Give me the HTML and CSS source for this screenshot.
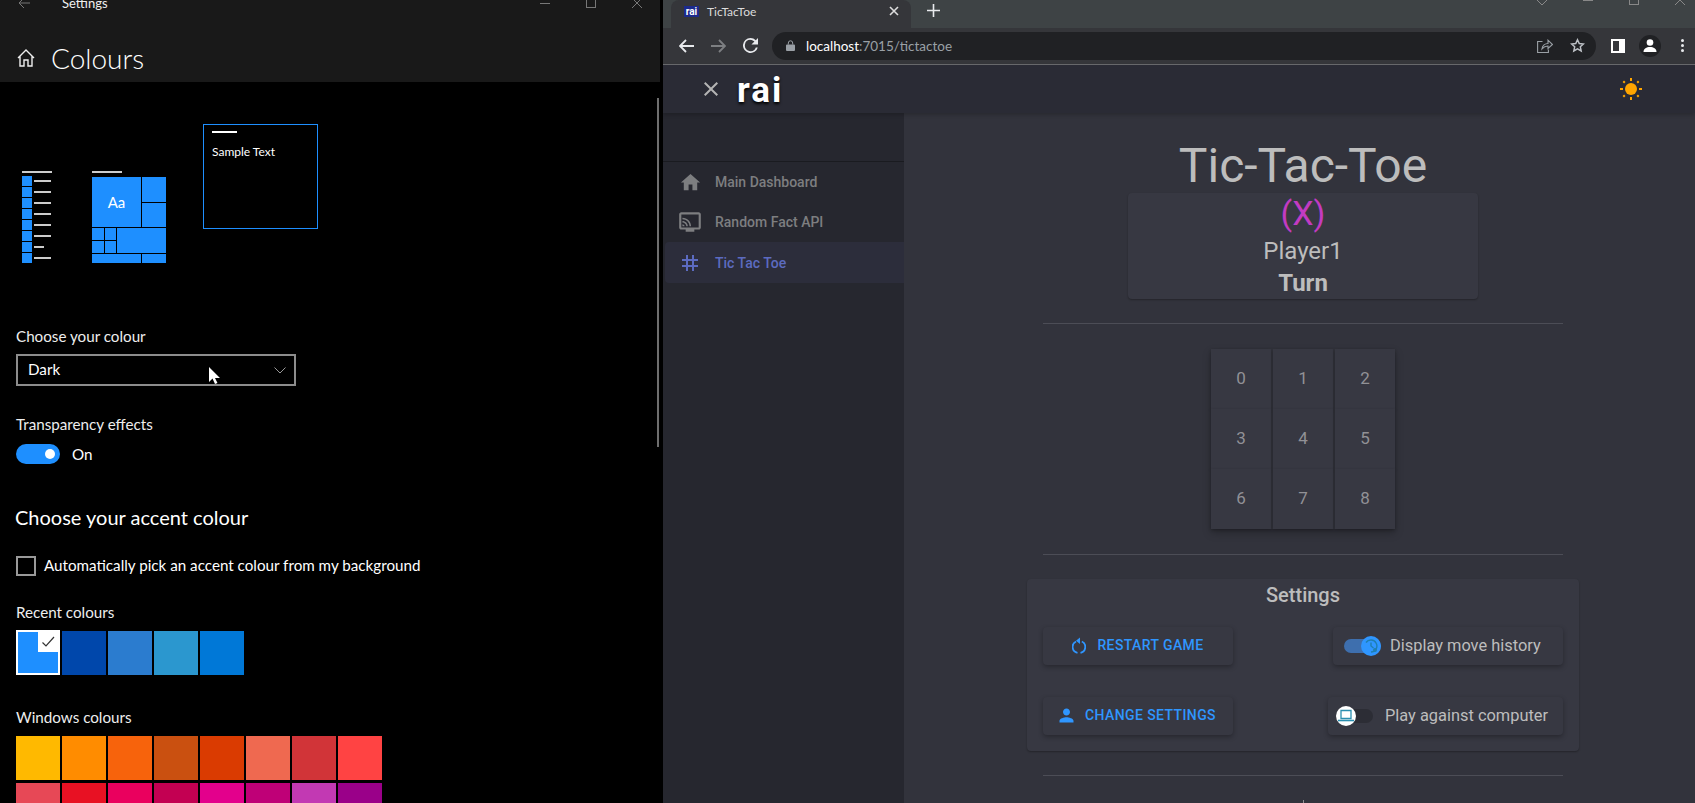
FILE: index.html

```html
<!DOCTYPE html>
<html lang="en">
<head>
  <meta charset="UTF-8" />
  <title>Colours and TicTacToe</title>
  <link rel="stylesheet" href="styles.css">
</head>
<body>
  <section class="settings">
    <header class="settings-head">
      <div class="titlebar">
        <svg class="tb-back" width="12" height="10" viewBox="0 0 12 10"><path d="M6 0 1 5l5 5M1 5h11" fill="none" stroke="#777" stroke-width="1"/></svg>
        <span class="tb-title">Settings</span>
        <span class="tb-min"></span>
        <span class="tb-max"></span>
        <svg class="tb-close" width="10" height="10" viewBox="0 0 10 10"><path d="M0 0l10 10M10 0 0 10" stroke="#777" stroke-width="1"/></svg>
      </div>
      <div class="page-title">
        <svg width="18" height="18" viewBox="0 0 18 18"><path d="M1 9 9 1l8 8M3 7.500V17h4v-6h4v6h4V7.500" fill="none" stroke="#eee" stroke-width="1.400"/></svg>
        <h1>Colours</h1>
      </div>
    </header>
    <div class="scrollbar"></div>

    <div class="previews">
      <div class="prev-list">
        <div class="prev-bar"></div>
        <div class="list-row"><i></i><b></b></div>
        <div class="list-row"><i></i><b></b></div>
        <div class="list-row"><i></i><b></b></div>
        <div class="list-row"><i></i><b></b></div>
        <div class="list-row"><i></i><b></b></div>
        <div class="list-row"><i></i><b></b></div>
        <div class="list-row"><i></i><b class="short"></b></div>
        <div class="list-row"><i></i><b></b></div>
      </div>
      <div class="prev-tiles">
        <div class="prev-bar"></div>
        <div class="tiles">
          <div class="tile-aa">Aa</div>
          <div class="tile-r1"></div>
          <div class="tile-r2"></div>
          <div class="tile-s1"></div>
          <div class="tile-s2"></div>
          <div class="tile-s3"></div>
          <div class="tile-s4"></div>
          <div class="tile-big"></div>
          <div class="tile-b1"></div>
          <div class="tile-b2"></div>
        </div>
      </div>
      <div class="prev-sample">
        <div class="sample-bar"></div>
        <p>Sample Text</p>
      </div>
    </div>

    <label class="s-label label-colour">Choose your colour</label>
    <div class="dropdown">
      <span class="lift">Dark</span>
      <svg width="12" height="7" viewBox="0 0 12 7"><path d="M.5.5 6 6 11.500.5" fill="none" stroke="#999" stroke-width="1"/></svg>
      <svg class="cursor" width="11" height="17" viewBox="0 0 11 17"><path d="M0 0v15l3.500-3.500L6 17l2.500-1L6 11h5z" fill="#fff"/></svg>
    </div>

    <label class="s-label label-trans">Transparency effects</label>
    <div class="toggle-row">
      <div class="win-toggle"><span></span></div>
      <span>On</span>
    </div>

    <h2 class="s-heading">Choose your accent colour</h2>
    <div class="check-row">
      <span class="checkbox"></span>
      <span class="lift">Automatically pick an accent colour from my background</span>
    </div>

    <label class="s-label label-recent">Recent colours</label>
    <div class="swatches">
      <div class="swatch picked">
        <span class="picked-mark">
          <svg width="14" height="12" viewBox="0 0 14 12"><path d="M1.500 6.500 5 10l8-9" fill="none" stroke="#333" stroke-width="1.200"/></svg>
        </span>
      </div>
      <div class="swatch c-cobalt"></div>
      <div class="swatch c-blue2"></div>
      <div class="swatch c-blue3"></div>
      <div class="swatch c-blue4"></div>
    </div>

    <label class="s-label label-windows">Windows colours</label>
    <div class="swatches win-grid">
      <div class="swatch" style="background:#ffb900"></div>
      <div class="swatch" style="background:#ff8c00"></div>
      <div class="swatch" style="background:#f7630c"></div>
      <div class="swatch" style="background:#ca5010"></div>
      <div class="swatch" style="background:#da3b01"></div>
      <div class="swatch" style="background:#ef6950"></div>
      <div class="swatch" style="background:#d13438"></div>
      <div class="swatch" style="background:#ff4343"></div>
      <div class="swatch" style="background:#e74856"></div>
      <div class="swatch" style="background:#e81123"></div>
      <div class="swatch" style="background:#ea005e"></div>
      <div class="swatch" style="background:#c30052"></div>
      <div class="swatch" style="background:#e3008c"></div>
      <div class="swatch" style="background:#bf0077"></div>
      <div class="swatch" style="background:#c239b3"></div>
      <div class="swatch" style="background:#9a0089"></div>
    </div>
  </section>

  <section class="browser">
    <div class="tabstrip">
      <div class="tab">
        <span class="favicon">rai</span>
        <span class="tab-title">TicTacToe</span>
        <svg class="tab-close" width="10" height="10" viewBox="0 0 10 10"><path d="M1 1l8 8M9 1 1 9" stroke="#ddd" stroke-width="1.600"/></svg>
      </div>
      <svg class="new-tab" width="13" height="13" viewBox="0 0 13 13"><path d="M6.500 0v13M0 6.500h13" stroke="#e8eaed" stroke-width="1.600"/></svg>
      <div class="win-ctrls">
        <svg width="10" height="5" viewBox="0 0 10 5"><path d="M0 0l5 5 5-5" fill="none" stroke="#888"/></svg>
        <span class="wc-min"></span>
        <span class="wc-max"></span>
        <svg width="10" height="5" viewBox="0 0 10 5"><path d="M0 5 5 0l5 5" fill="none" stroke="#888"/></svg>
      </div>
    </div>

    <div class="toolbar">
      <svg class="nav-icon" width="15" height="14" viewBox="0 0 15 14"><path d="M7 1 1 7l6 6M1 7h14" fill="none" stroke="#e8eaed" stroke-width="1.800"/></svg>
      <svg class="nav-icon" width="15" height="14" viewBox="0 0 15 14"><path d="M8 1l6 6-6 6M14 7H0" fill="none" stroke="#7d7f82" stroke-width="1.800"/></svg>
      <svg class="nav-icon" width="15" height="15" viewBox="4 4 16 16"><path d="M17.650 6.350A7.960 7.960 0 0 0 12 4a8 8 0 1 0 7.730 10h-2.080A6 6 0 1 1 12 6c1.660 0 3.140.69 4.220 1.780L13 11h7V4z" fill="#e8eaed"/></svg>
      <div class="omnibox">
        <svg width="9" height="11" viewBox="0 0 9 11"><path d="M1 4.500h7a1 1 0 0 1 1 1V10a1 1 0 0 1-1 1H1a1 1 0 0 1-1-1V5.500a1 1 0 0 1 1-1z" fill="#9aa0a6"/><path d="M2.300 4.500V3a2.200 2.200 0 0 1 4.400 0v1.500" fill="none" stroke="#9aa0a6"/></svg>
        <span class="url"><b>localhost</b>:7015/tictactoe</span>
        <svg class="omni-share" width="16" height="14" viewBox="0 0 16 14"><path d="M5.500 2.500H.6v11h10.800V10.500" fill="none" stroke="#9aa0a6" stroke-width="1.100"/><path d="M5 9.800c.5-3 3-5.300 6-5.300V1.200l4.500 4.300-4.500 4V7C8.500 7 6.500 8 5 9.800z" fill="none" stroke="#9aa0a6" stroke-width="1.100"/></svg>
        <svg class="omni-star" width="15" height="15" viewBox="0 0 24 24"><path d="M12 2.800l2.800 6.100 6.700.7-5 4.500 1.400 6.600L12 17.300l-5.900 3.400 1.400-6.600-5-4.500 6.700-.7z" fill="none" stroke="#bdc1c6" stroke-width="2.400"/></svg>
      </div>
      <div class="panel-icon"><span></span></div>
      <div class="avatar">
        <svg width="16" height="16" viewBox="0 0 16 16"><circle cx="8" cy="4.500" r="3.300" fill="#fff"/><path d="M1.500 14c0-3.500 3-5 6.500-5s6.500 1.500 6.500 5z" fill="#fff"/></svg>
      </div>
      <div class="kebab"><i></i><i></i><i></i></div>
    </div>

    <div class="appbar">
      <svg class="app-close" width="24" height="24" viewBox="0 0 24 24"><path d="M19 6.410 17.590 5 12 10.590 6.410 5 5 6.410 10.590 12 5 17.590 6.410 19 12 13.410 17.590 19 19 17.590 13.410 12z"/></svg>
      <span class="brand">rai</span>
      <svg class="sun" width="24" height="24" viewBox="0 0 24 24">
        <circle cx="12" cy="12" r="6" fill="#ffa500"/>
        <path d="M12 1v3M12 20v3M1 12h3M20 12h3M4.300 4.300l1.500 1.500M18.200 18.200l1.500 1.500M4.300 19.700l1.500-1.500M18.200 5.800l1.500-1.500" stroke="#ffa500" stroke-width="2"/>
      </svg>
    </div>

    <div class="app-body">
      <nav class="sidebar">
        <div class="side-top"></div>
        <a class="nav-item">
          <span class="nav-ico"><svg width="23" height="23" viewBox="0 0 24 24"><path d="M10 20v-6h4v6h5v-8h3L12 3 2 12h3v8z"/></svg></span>
          Main Dashboard
        </a>
        <a class="nav-item">
          <span class="nav-ico"><svg width="26" height="26" viewBox="0 0 24 24"><path d="M20 3H4c-1.100 0-2 .9-2 2v12c0 1.100.9 2 2 2h4v2h8v-2h4c1.100 0 1.990-.9 1.990-2L22 5c0-1.100-.9-2-2-2zm0 14H4V5h16v12zM5 14v2h2c0-1.110-.89-2-2-2zm0-3v1.430c1.970 0 3.570 1.600 3.570 3.570H10c0-2.760-2.240-5-5-5zm0-3v1.450c3.610 0 6.550 2.940 6.550 6.550H13c0-4.420-3.590-8-8-8z"/></svg></span>
          Random Fact API
        </a>
        <a class="nav-item active">
          <span class="nav-ico"><svg width="24" height="24" viewBox="0 0 24 24"><path d="M20 10V8h-4V4h-2v4h-4V4H8v4H4v2h4v4H4v2h4v4h2v-4h4v4h2v-4h4v-2h-4v-4h4zm-6 4h-4v-4h4v4z"/></svg></span>
          Tic Tac Toe
        </a>
      </nav>

      <main class="game">
        <h1 class="game-title">Tic-Tac-Toe</h1>
        <div class="turn-card">
          <div class="turn-mark">(X)</div>
          <div class="turn-name">Player1</div>
          <div class="turn-word">Turn</div>
        </div>
        <hr class="rule rule-a">
        <div class="board">
          <button class="cell">0</button>
          <button class="cell">1</button>
          <button class="cell">2</button>
          <button class="cell">3</button>
          <button class="cell">4</button>
          <button class="cell">5</button>
          <button class="cell">6</button>
          <button class="cell">7</button>
          <button class="cell">8</button>
        </div>
        <hr class="rule rule-b">
        <div class="settings-card">
          <h3>Settings</h3>
          <div class="settings-row">
            <button class="act-btn restart">
              <svg width="14" height="17" viewBox="0 0 14 17"><path d="M4 4.500A6 6 0 0 0 5.500 15.800M8.500 15.800A6 6 0 0 0 9.800 4.500" fill="none" stroke="#2f96ff" stroke-width="1.800"/><path d="M8 .5 4 3.800 8 7z"/></svg>
              Restart Game
            </button>
            <div class="switch-box">
              <div class="switch on"><span class="thumb">
                <svg width="14" height="14" viewBox="0 0 14 14"><path d="M2 3.500A6 6 0 1 1 7 13M7 3.500V7l2.500 2" fill="none" stroke="#1f7fb0" stroke-width="1.400"/><circle cx="11" cy="11" r="2" fill="#1f7fb0"/></svg>
              </span></div>
              Display move history
            </div>
          </div>
          <div class="settings-row">
            <button class="act-btn">
              <svg width="21" height="21" viewBox="0 0 24 24"><path d="M12 12c2.210 0 4-1.790 4-4s-1.790-4-4-4-4 1.790-4 4 1.790 4 4 4zm0 2c-2.670 0-8 1.340-8 4v2h16v-2c0-2.660-5.330-4-8-4z"/></svg>
              Change Settings
            </button>
            <div class="switch-box wide">
              <div class="switch"><span class="thumb">
                <svg width="16" height="14" viewBox="0 0 16 14"><path d="M3 1.500h10v8H3z" fill="#fff" stroke="#2a8fb0" stroke-width="1.300"/><path d="M0 11.500h16" stroke="#2a8fb0" stroke-width="1.600"/></svg>
              </span></div>
              Play against computer
            </div>
          </div>
        </div>
        <hr class="rule rule-c">
        <div class="tick"></div>
      </main>
    </div>
  </section>
</body>
</html>
```

FILE: styles.css

```css
* {
  box-sizing: border-box;
}

html, body {
  height: 100%;
}

body {
  margin: 0;
  height: 803px;
  overflow: hidden;
  display: flex;
  background: #000;
  font-family: Roboto, sans-serif;
}

/* left window */
.settings {
  position: relative;
  width: 660px;
  flex: none;
  height: 803px;
  overflow: hidden;
  background: #000;
  color: #fff;
  font-family: Lato, sans-serif;
  font-size: 15.200px;
}

.settings-head {
  display: flow-root;
  height: 82px;
  background: #191919;
}

.titlebar {
  display: flex;
  align-items: center;
  height: 20px;
  margin-top: -7px;
}

.tb-back {
  margin-left: 18px;
}

.tb-title {
  margin-left: 32px;
  font-size: 13px;
  color: #eee;
}

.tb-min {
  margin-left: auto;
  width: 10px;
  height: 1px;
  background: #777;
}

.tb-max {
  margin-left: 36px;
  width: 10px;
  height: 10px;
  border: 1px solid #777;
}

.tb-close {
  margin-left: 36px;
  margin-right: 18px;
}

.page-title {
  display: flex;
  align-items: center;
  margin-top: 25px;
  padding-left: 17px;
  gap: 16px;
}

.page-title h1 {
  margin: 0;
  font-size: 28px;
  font-weight: 300;
  line-height: 40px;
}

.scrollbar {
  position: absolute;
  left: 657px;
  top: 98px;
  width: 2px;
  height: 349px;
  background: #6e6e6e;
}

.previews {
  display: flex;
  align-items: flex-end;
  height: 181px;
  padding-left: 22px;
}

.prev-list {
  width: 30px;
}

.prev-bar {
  height: 2px;
  background: #ccc;
}

.list-row {
  display: flex;
  align-items: center;
  gap: 2px;
  height: 10px;
  margin-top: 1px;
}

.prev-bar + .list-row {
  margin-top: 3px;
}

.list-row i {
  width: 10px;
  height: 10px;
  background: #1e8fff;
}

.list-row b {
  width: 17px;
  height: 2px;
  background: #ccc;
}

.list-row b.short {
  width: 10px;
}

.prev-tiles {
  width: 74px;
  margin-left: 40px;
}

.prev-tiles .prev-bar {
  width: 30px;
  margin-bottom: 4px;
}

.tiles {
  display: grid;
  grid-template-columns: 12px 11px 24px 24px;
  grid-template-rows: 25px 24px 12px 12px 9px;
  gap: 1px;
}

.tiles div {
  background: #1e8fff;
}

.tile-aa {
  grid-column: 1 / 4;
  grid-row: 1 / 3;
  display: flex;
  align-items: center;
  justify-content: center;
  font-size: 15px;
}

.tile-r1 { grid-column: 4; grid-row: 1; }
.tile-r2 { grid-column: 4; grid-row: 2; }
.tile-s1 { grid-column: 1; grid-row: 3; }
.tile-s2 { grid-column: 2; grid-row: 3; }
.tile-s3 { grid-column: 1; grid-row: 4; }
.tile-s4 { grid-column: 2; grid-row: 4; }
.tile-big { grid-column: 3 / 5; grid-row: 3 / 5; }
.tile-b1 { grid-column: 1 / 4; grid-row: 5; }
.tile-b2 { grid-column: 4; grid-row: 5; }

.prev-sample {
  width: 115px;
  height: 105px;
  margin-left: 37px;
  margin-bottom: 34px;
  border: 1px solid #1e8fff;
  padding: 6px 8px;
}

.sample-bar {
  width: 25px;
  height: 2px;
  background: #fff;
}

.prev-sample p {
  margin: 11px 0 0;
  font-size: 12px;
  line-height: 16px;
}

.s-label {
  display: block;
  margin-left: 16px;
  font-size: 15.200px;
  line-height: 20px;
  color: #eee;
}

.lift {
  padding-bottom: 2px;
}

.label-colour {
  margin-top: 63px;
}

.dropdown {
  position: relative;
  display: flex;
  align-items: center;
  justify-content: space-between;
  width: 280px;
  height: 32px;
  margin: 8px 0 0 16px;
  padding: 0 8px 0 10px;
  border: 2px solid #8c8c8c;
}

.cursor {
  position: absolute;
  left: 191px;
  top: 11px;
}

.label-trans {
  margin-top: 28px;
}

.toggle-row {
  display: flex;
  align-items: center;
  gap: 12px;
  margin: 10px 0 0 16px;
}

.win-toggle {
  display: flex;
  align-items: center;
  justify-content: flex-end;
  width: 44px;
  height: 20px;
  padding-right: 5px;
  border-radius: 10px;
  background: #1e8fff;
}

.win-toggle span {
  width: 10px;
  height: 10px;
  border-radius: 50%;
  background: #fff;
}

.s-heading {
  margin: 38px 0 0 15px;
  font-size: 20px;
  font-weight: 400;
  line-height: 30px;
}

.check-row {
  display: flex;
  align-items: center;
  gap: 8px;
  margin: 24px 0 0 16px;
}

.checkbox {
  width: 20px;
  height: 20px;
  border: 2px solid #999;
}

.label-recent {
  margin-top: 26px;
}

.swatches {
  display: grid;
  grid-template-columns: repeat(8, 44px);
  gap: 3px 2px;
  margin: 9px 0 0 16px;
}

.swatch {
  height: 44px;
}

.picked {
  display: flex;
  justify-content: flex-end;
  height: 45px;
  margin-top: -1px;
  background: #1e8fff;
  border: 2px solid #fff;
}

.picked-mark {
  display: flex;
  align-items: center;
  justify-content: center;
  width: 20px;
  height: 20px;
  background: #fff;
}

.c-cobalt { background: #0047ab; }
.c-blue2 { background: #2b7ccf; }
.c-blue3 { background: #2b97cf; }
.c-blue4 { background: #0078d7; }

.label-windows {
  margin-top: 32px;
}

/* chrome window */
.browser {
  flex: 1;
  min-width: 0;
  margin-left: 3px;
  height: 803px;
  background: #32333c;
  overflow: hidden;
}

.tabstrip {
  position: relative;
  display: flex;
  align-items: flex-start;
  height: 28px;
  padding-left: 8px;
  background: #3e4345;
}

.tab {
  display: flex;
  align-items: center;
  width: 240px;
  height: 28px;
  padding: 0 12px 6px 13px;
  background: #35363a;
  border-radius: 8px 8px 0 0;
  color: #dcdcdc;
  font-size: 12px;
}

.favicon {
  width: 15px;
  height: 11px;
  background: #1c2a8c;
  color: #fff;
  font-size: 10px;
  font-weight: 700;
  line-height: 11px;
  text-align: center;
}

.tab-title {
  margin-left: 8px;
  font-family: Lato, sans-serif;
}

.tab-close {
  margin-left: auto;
}

.new-tab {
  margin: 4px 0 0 16px;
}

.win-ctrls {
  position: absolute;
  top: 0;
  right: 10px;
  display: flex;
  align-items: flex-start;
  gap: 36px;
}

.wc-min {
  width: 10px;
  height: 1px;
  background: #888;
}

.wc-max {
  width: 10px;
  height: 5px;
  border: 1px solid #888;
  border-top: 0;
}

.toolbar {
  display: flex;
  align-items: center;
  height: 37px;
  padding: 0 0 1px 16px;
  background: #35363a;
  border-bottom: 1px solid #6a6b6e;
}

.nav-icon {
  margin-right: 17px;
}

.omnibox {
  display: flex;
  align-items: center;
  width: 824px;
  height: 28px;
  margin-left: -3px;
  padding: 0 11px 0 14px;
  border-radius: 14px;
  background: #202124;
}

.url {
  margin-left: 11px;
  color: #9aa0a6;
  font-size: 13.500px;
  font-family: Lato, sans-serif;
}

.url b {
  color: #fff;
  font-weight: 400;
}

.omni-share {
  margin-left: auto;
}

.omni-star {
  margin-left: 17px;
}

.panel-icon {
  width: 14px;
  height: 14px;
  margin-left: 15px;
  padding: 2px 6px 2px 2px;
  background: #fff;
}

.panel-icon span {
  display: block;
  height: 100%;
  background: #35363a;
}

.avatar {
  display: flex;
  align-items: center;
  justify-content: center;
  width: 22px;
  height: 22px;
  margin-left: 14px;
  border-radius: 50%;
  background: #202124;
}

.kebab {
  display: flex;
  flex-direction: column;
  gap: 2px;
  margin-left: 20px;
}

.kebab i {
  width: 3px;
  height: 3px;
  border-radius: 50%;
  background: #e8eaed;
}

.appbar {
  position: relative;
  z-index: 2;
  display: flex;
  align-items: center;
  height: 48px;
  padding: 0 52px 0 36px;
  background: #2a2b35;
  box-shadow: 0 2px 4px rgba(0,0,0,0.2);
}

.app-close {
  fill: #b4b4b4;
}

.brand {
  margin-left: 14px;
  padding-top: 3px;
  color: #fff;
  font-size: 35px;
  font-weight: 700;
  letter-spacing: 2px;
  text-shadow: 0 2px 3px #000;
}

.sun {
  margin-left: auto;
}

.app-body {
  display: flex;
  height: 690px;
}

.sidebar {
  width: 241px;
  flex: none;
  background: #26272f;
  font-size: 14px;
  font-weight: 500;
  color: #7d7e80;
}

.side-top {
  height: 49px;
  border-bottom: 1px solid #1a1b20;
}

.nav-item {
  display: flex;
  align-items: center;
  height: 40px;
  margin-left: 2px;
  border-radius: 4px 0 0 4px;
}

.nav-ico {
  display: flex;
  justify-content: center;
  width: 50px;
  fill: #7d7e80;
}

.active {
  height: 41px;
  background: #2c2d3b;
  color: #5c6bc0;
}

.active .nav-ico {
  fill: #5c6bc0;
}

/* game column */
.game {
  flex: 1;
  display: flex;
  flex-direction: column;
  align-items: center;
  min-width: 0;
  padding-left: 7px;
  background: #32333c;
  color: #bdbdbd;
}

.game-title {
  margin: 25px 0 0;
  font-size: 48px;
  font-weight: 400;
  line-height: 55px;
}

.turn-card {
  width: 350px;
  height: 106px;
  background: #373842;
  border-radius: 4px;
  box-shadow: 0 1px 2px rgba(0,0,0,0.3);
  text-align: center;
}

.turn-mark {
  color: #c23bc2;
  font-size: 34px;
  line-height: 40px;
}

.turn-name {
  font-size: 24px;
  line-height: 36px;
}

.turn-word {
  font-size: 24px;
  font-weight: 700;
  line-height: 29px;
}

.rule {
  width: 520px;
  height: 1px;
  margin: 0;
  border: 0;
  background: #4c4d56;
}

.rule-a {
  margin-top: 24px;
}

.board {
  display: grid;
  grid-template-columns: repeat(3, 60px);
  grid-auto-rows: 60px;
  column-gap: 2px;
  margin-top: 25px;
  box-shadow: 0 4px 8px rgba(0,0,0,0.25);
}

.cell {
  padding: 0 0 2px;
  border: 0;
  background: #373842;
  color: #919196;
  font-family: Roboto, sans-serif;
  font-size: 17px;
  box-shadow: 0 1px 3px rgba(0,0,0,0.25);
}

.rule-b {
  margin-top: 25px;
}

.settings-card {
  width: 552px;
  height: 172px;
  margin-top: 24px;
  padding: 0 16px;
  background: #373842;
  border-radius: 4px;
  box-shadow: 0 1px 2px rgba(0,0,0,0.3);
}

.settings-card h3 {
  margin: 0 0 16px;
  font-size: 20px;
  font-weight: 500;
  line-height: 32px;
  text-align: center;
}

.settings-row {
  display: flex;
  justify-content: space-between;
  height: 38px;
  margin-bottom: 32px;
}

.act-btn {
  display: flex;
  align-items: center;
  justify-content: center;
  gap: 8px;
  width: 190px;
  padding: 0 4px 2px 0;
  border: 0;
  border-radius: 4px;
  background: #373842;
  color: #2f96ff;
  fill: #2f96ff;
  font-family: Roboto, sans-serif;
  font-size: 14px;
  font-weight: 500;
  letter-spacing: 0.4px;
  text-transform: uppercase;
  box-shadow: 0 2px 5px rgba(0,0,0,0.3);
}

.act-btn.restart {
  gap: 11px;
  padding-right: 0;
}

.switch-box {
  display: flex;
  align-items: center;
  gap: 9px;
  width: 230px;
  padding: 0 0 2px 11px;
  border-radius: 4px;
  font-size: 16.400px;
  background: #373842;
  box-shadow: 0 2px 5px rgba(0,0,0,0.3);
}

.switch-box.wide {
  width: 235px;
  padding-left: 8px;
  gap: 12px;
}

.switch {
  position: relative;
  width: 37px;
  height: 14px;
  margin-top: 2px;
  border-radius: 7px;
  background: #2c2d35;
}

.switch.on {
  background: #3e6fae;
}

.thumb {
  position: absolute;
  top: -3px;
  left: 0;
  display: flex;
  align-items: center;
  justify-content: center;
  width: 20px;
  height: 20px;
  border-radius: 50%;
  background: #fff;
}

.on .thumb {
  left: 17px;
  background: #2f96ff;
}

.rule-c {
  margin-top: 24px;
}

.tick {
  width: 1px;
  height: 3px;
  margin-top: 24px;
  background: #8f8f92;
}
```
